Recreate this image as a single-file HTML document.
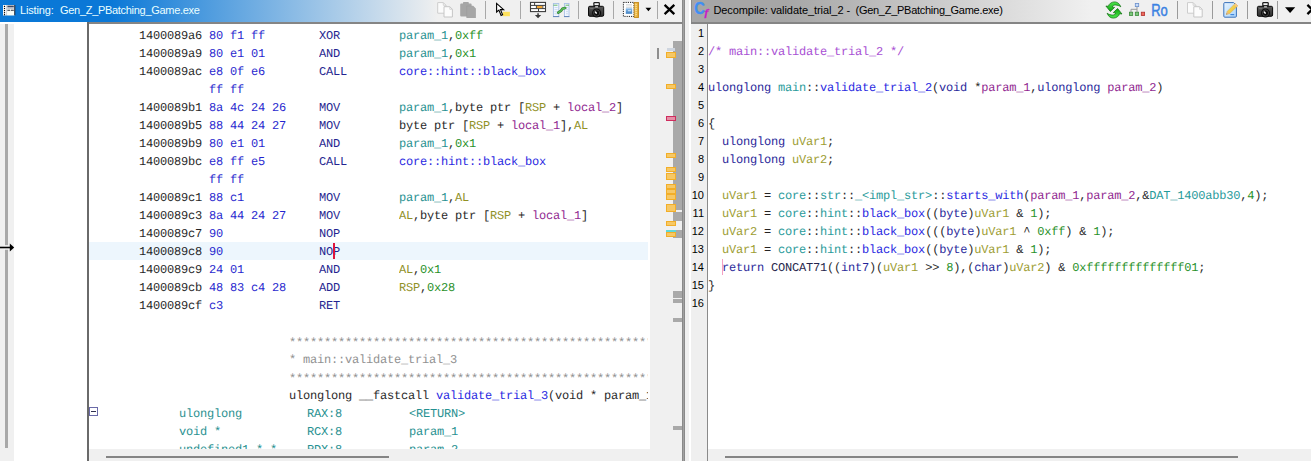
<!DOCTYPE html>
<html><head><meta charset="utf-8"><title>Ghidra</title>
<style>
html,body{margin:0;padding:0}
body{width:1311px;height:461px;overflow:hidden;background:#fff;position:relative;font-family:"Liberation Sans",sans-serif}
.a{position:absolute}
.t{position:absolute;white-space:pre;font-family:"Liberation Mono",monospace;font-size:12px;letter-spacing:-0.2px;line-height:18px;height:18px;color:#000;transform:translateY(1px);text-rendering:geometricPrecision;opacity:.86}
.ln{position:absolute;left:690px;width:14px;text-align:right;font-family:"Liberation Sans",sans-serif;font-size:11px;line-height:18px;height:18px;color:#000}
.by{color:#0000c8}.mn{color:#000080}.pa{color:#008080}.sc{color:#008000}.fn{color:#0000dc}.rg{color:#808000}.lo{color:#800080}.cm{color:#808080}.as{position:relative;top:1px}
.dc{color:#9a32cd}.ty{color:#00008b}.gl{color:#008b8b}.pr{color:#800080}.va{color:#8e8e0a}.kw{color:#00008b}.op{color:#000030}
.sep{position:absolute;top:1px;width:1px;height:18px;background:#b4b4b4}
.title{position:absolute;top:-1px;height:22px;line-height:22px;font-size:11px;white-space:pre}
#lclip{position:absolute;left:89px;top:24px;width:559px;height:425px;overflow:hidden}
#lclip .t{margin-left:-89px;margin-top:-24px}
.mk{position:absolute;left:666px;width:10px;border:1px solid #f2ae28;background:#f6c866;box-sizing:border-box}
</style></head><body>

<!-- ===== left panel: Listing ===== -->
<div class="a" style="left:0;top:0;width:682px;height:22px;background:linear-gradient(90deg,#0a78d7 0px,#0a78d7 110px,#f0f0f0 438px,#f0f0f0 100%)"></div>
<div class="a" style="left:87px;top:22px;width:595px;height:2px;background:#858585"></div>
<svg class="a" style="left:0;top:0" width="20" height="22" viewBox="0 0 20 22">
<rect x="3" y="5" width="12" height="10.3" fill="#f4f4f0"/>
<rect x="3" y="5" width="3.2" height="10.3" fill="#fff"/>
<rect x="6.2" y="5" width="1" height="10.3" fill="#c8ccd4"/>
<g fill="#000"><rect x="3.9" y="5.8" width="1.2" height="1.2"/><rect x="3.9" y="7.9" width="1.2" height="1.2"/><rect x="3.9" y="10" width="1.2" height="1.2"/><rect x="3.9" y="12.1" width="1.2" height="1.2"/><rect x="3.9" y="14.1" width="1.2" height="1.2"/></g>
<rect x="7.4" y="5.6" width="6.4" height="1.6" fill="#3c4660"/>
<rect x="7.4" y="7.4" width="6.4" height="1.2" fill="#9aa4b8"/>
<path d="M7.4 10.2H10M10.8 10.2H13.8" stroke="#2a3040" stroke-width="1.1"/>
<rect x="7.2" y="11.4" width="6.8" height="3.9" fill="#fbfdf6"/>
<rect x="14.2" y="5" width="1.1" height="10.3" fill="#1c2a3c"/>
</svg>
<div class="title" style="left:20px;color:#eaffff;letter-spacing:-0.15px">Listing:</div>
<div class="title" style="left:60px;color:#eaffff;letter-spacing:-0.3px">Gen_Z_PBatching_Game.exe</div>

<!-- left gutter -->
<div class="a" style="left:0;top:24px;width:14px;height:437px;background:#f0f0f0"></div>
<div class="a" style="left:5px;top:24px;width:3px;height:424px;background:#a8a8a8"></div>
<div class="a" style="left:87px;top:22px;width:2px;height:439px;background:#6a6a6a"></div>
<!-- listing current line highlight -->
<div class="a" style="left:89px;top:242px;width:559px;height:18px;background:#edf6fd"></div>
<!-- right margin / overview -->
<div class="a" style="left:650px;top:24px;width:32px;height:437px;background:#f0f0f0"></div>
<div class="a" style="left:89px;top:449px;width:593px;height:12px;background:#f0f0f0"></div>
<div class="a" style="left:106px;top:456px;width:283px;height:2px;background:#858585"></div>
<!-- overview dark column -->
<div class="a" style="left:673px;top:41px;width:9px;height:169px;background:#a9a9a9"></div>
<div class="a" style="left:673px;top:212px;width:9px;height:9px;background:#a9a9a9"></div>
<div class="a" style="left:673px;top:230px;width:9px;height:8px;background:#a9a9a9"></div>
<div class="a" style="left:673px;top:291px;width:9px;height:7px;background:#a9a9a9"></div>
<div class="a" style="left:673px;top:299px;width:9px;height:4px;background:#a9a9a9"></div>
<div class="a" style="left:673px;top:318px;width:9px;height:4px;background:#a9a9a9"></div>
<div class="a" style="left:673px;top:426px;width:9px;height:4px;background:#a9a9a9"></div>
<div class="a" style="left:657px;top:48px;width:2px;height:11px;background:#8e8e8e"></div>
<!-- markers -->
<div class="a" style="left:667px;top:48px;width:8px;height:3px;background:#cfd6e0"></div>
<div class="mk" style="top:52px;height:6px"></div>
<div class="mk" style="top:84px;height:5px"></div>
<div class="mk" style="top:116px;height:5px;background:#e58fa6;border-color:#cf2c5e"></div>
<div class="mk" style="top:153px;height:5px"></div>
<div class="mk" style="top:167px;height:5px"></div>
<div class="mk" style="top:173px;height:7px"></div>
<div class="mk" style="top:184px;height:5px"></div>
<div class="mk" style="top:189px;height:5px"></div>
<div class="mk" style="top:194px;height:6px"></div>
<div class="mk" style="top:204px;height:8px"></div>
<div class="mk" style="top:221px;height:5px"></div>
<div class="a" style="left:666px;top:230px;width:10px;height:2px;background:#5fd8d8"></div>
<div class="mk" style="top:232px;height:5px"></div>

<!-- divider -->
<div class="a" style="left:682px;top:0;width:3px;height:461px;background:linear-gradient(90deg,#8a8a8a 0,#8a8a8a 1px,#a2a2a2 1px,#a2a2a2 2px,#8a8a8a 2px)"></div>
<div class="a" style="left:685px;top:0;width:4px;height:461px;background:#f0f0f0"></div>

<div id="lclip">
<div class="t" style="left:139px;top:26px">1400089a6</div>
<div class="t" style="left:209px;top:26px"><span class="by">80 f1 ff</span></div>
<div class="t" style="left:319px;top:26px"><span class="mn">XOR</span></div>
<div class="t" style="left:399px;top:26px"><span class="pa">param_1</span>,<span class="sc">0xff</span></div>
<div class="t" style="left:139px;top:44px">1400089a9</div>
<div class="t" style="left:209px;top:44px"><span class="by">80 e1 01</span></div>
<div class="t" style="left:319px;top:44px"><span class="mn">AND</span></div>
<div class="t" style="left:399px;top:44px"><span class="pa">param_1</span>,<span class="sc">0x1</span></div>
<div class="t" style="left:139px;top:62px">1400089ac</div>
<div class="t" style="left:209px;top:62px"><span class="by">e8 0f e6</span></div>
<div class="t" style="left:319px;top:62px"><span class="mn">CALL</span></div>
<div class="t" style="left:399px;top:62px"><span class="fn">core::hint::black_box</span></div>
<div class="t" style="left:209px;top:80px"><span class="by">ff ff</span></div>
<div class="t" style="left:139px;top:98px">1400089b1</div>
<div class="t" style="left:209px;top:98px"><span class="by">8a 4c 24 26</span></div>
<div class="t" style="left:319px;top:98px"><span class="mn">MOV</span></div>
<div class="t" style="left:399px;top:98px"><span class="pa">param_1</span>,byte ptr [<span class="rg">RSP</span> + <span class="lo">local_2</span>]</div>
<div class="t" style="left:139px;top:116px">1400089b5</div>
<div class="t" style="left:209px;top:116px"><span class="by">88 44 24 27</span></div>
<div class="t" style="left:319px;top:116px"><span class="mn">MOV</span></div>
<div class="t" style="left:399px;top:116px">byte ptr [<span class="rg">RSP</span> + <span class="lo">local_1</span>],<span class="rg">AL</span></div>
<div class="t" style="left:139px;top:134px">1400089b9</div>
<div class="t" style="left:209px;top:134px"><span class="by">80 e1 01</span></div>
<div class="t" style="left:319px;top:134px"><span class="mn">AND</span></div>
<div class="t" style="left:399px;top:134px"><span class="pa">param_1</span>,<span class="sc">0x1</span></div>
<div class="t" style="left:139px;top:152px">1400089bc</div>
<div class="t" style="left:209px;top:152px"><span class="by">e8 ff e5</span></div>
<div class="t" style="left:319px;top:152px"><span class="mn">CALL</span></div>
<div class="t" style="left:399px;top:152px"><span class="fn">core::hint::black_box</span></div>
<div class="t" style="left:209px;top:170px"><span class="by">ff ff</span></div>
<div class="t" style="left:139px;top:188px">1400089c1</div>
<div class="t" style="left:209px;top:188px"><span class="by">88 c1</span></div>
<div class="t" style="left:319px;top:188px"><span class="mn">MOV</span></div>
<div class="t" style="left:399px;top:188px"><span class="pa">param_1</span>,<span class="rg">AL</span></div>
<div class="t" style="left:139px;top:206px">1400089c3</div>
<div class="t" style="left:209px;top:206px"><span class="by">8a 44 24 27</span></div>
<div class="t" style="left:319px;top:206px"><span class="mn">MOV</span></div>
<div class="t" style="left:399px;top:206px"><span class="rg">AL</span>,byte ptr [<span class="rg">RSP</span> + <span class="lo">local_1</span>]</div>
<div class="t" style="left:139px;top:224px">1400089c7</div>
<div class="t" style="left:209px;top:224px"><span class="by">90</span></div>
<div class="t" style="left:319px;top:224px"><span class="mn">NOP</span></div>
<div class="t" style="left:139px;top:242px">1400089c8</div>
<div class="t" style="left:209px;top:242px"><span class="by">90</span></div>
<div class="t" style="left:319px;top:242px"><span class="mn">NOP</span></div>
<div class="t" style="left:139px;top:260px">1400089c9</div>
<div class="t" style="left:209px;top:260px"><span class="by">24 01</span></div>
<div class="t" style="left:319px;top:260px"><span class="mn">AND</span></div>
<div class="t" style="left:399px;top:260px"><span class="rg">AL</span>,<span class="sc">0x1</span></div>
<div class="t" style="left:139px;top:278px">1400089cb</div>
<div class="t" style="left:209px;top:278px"><span class="by">48 83 c4 28</span></div>
<div class="t" style="left:319px;top:278px"><span class="mn">ADD</span></div>
<div class="t" style="left:399px;top:278px"><span class="rg">RSP</span>,<span class="sc">0x28</span></div>
<div class="t" style="left:139px;top:296px">1400089cf</div>
<div class="t" style="left:209px;top:296px"><span class="by">c3</span></div>
<div class="t" style="left:319px;top:296px"><span class="mn">RET</span></div>
<div class="t" style="left:289px;top:332px"><span class="cm as">************************************************************</span></div>
<div class="t" style="left:289px;top:350px"><span class="cm">* main::validate_trial_3</span></div>
<div class="t" style="left:289px;top:368px"><span class="cm as">************************************************************</span></div>
<div class="t" style="left:289px;top:386px">ulonglong __fastcall <span class="fn">validate_trial_3</span>(void * param_1, ulonglong param_2)</div>
<div class="t" style="left:179px;top:404px"><span class="pa">ulonglong</span></div>
<div class="t" style="left:307px;top:404px"><span class="pa">RAX:8</span></div>
<div class="t" style="left:409px;top:404px"><span class="pa">&lt;RETURN&gt;</span></div>
<div class="t" style="left:179px;top:422px"><span class="pa">void *</span></div>
<div class="t" style="left:307px;top:422px"><span class="pa">RCX:8</span></div>
<div class="t" style="left:409px;top:422px"><span class="pa">param_1</span></div>
<div class="t" style="left:179px;top:440px"><span class="pa">undefined1 * *</span></div>
<div class="t" style="left:307px;top:440px"><span class="pa">RDX:8</span></div>
<div class="t" style="left:409px;top:440px"><span class="pa">param_2</span></div>
</div>
<!-- caret -->
<div class="a" style="left:333px;top:243px;width:2px;height:16px;background:#e0143c"></div>
<!-- collapse box -->
<div class="a" style="left:89px;top:407px;width:7px;height:7px;border:1px solid #6a6aa8;background:#fff"></div>
<div class="a" style="left:91px;top:411px;width:5px;height:1px;background:#303050"></div>
<!-- arrow -->
<svg class="a" style="left:0;top:240px" width="16" height="16" viewBox="0 0 16 16"><rect x="4" y="5.2" width="5" height="4.5" fill="#f6f6f6"/><path d="M0 7.5H10" stroke="#000" stroke-width="1.6"/><path d="M9.8 3.6L14.2 7.5L9.8 11.4Z" fill="#000"/></svg>

<svg class="a" style="left:430px;top:0" width="252" height="22" viewBox="430 0 252 22">
<defs>
<linearGradient id="cam" x1="0" y1="0" x2="0" y2="1"><stop offset="0" stop-color="#5a5a5a"/><stop offset="1" stop-color="#2c2c2c"/></linearGradient>
<linearGradient id="rul" x1="0" y1="0" x2="1" y2="0"><stop offset="0" stop-color="#f6d070"/><stop offset="1" stop-color="#e0a020"/></linearGradient>
<linearGradient id="blu" x1="0" y1="0" x2="0" y2="1"><stop offset="0" stop-color="#8ec0ee"/><stop offset="1" stop-color="#3f7fc0"/></linearGradient>
</defs>
<!-- copy (disabled) -->
<path d="M437.7 2.6H443.3L446 5.3V13.2H437.7Z" fill="#fbfbfb" stroke="#cdcdcd" stroke-width="1"/>
<path d="M443.3 2.6V5.3H446" fill="none" stroke="#cdcdcd" stroke-width=".8"/>
<path d="M444 6.7H449.8L452.4 9.3V17H444Z" fill="#fcfcfc" stroke="#c6c6c6" stroke-width="1"/>
<path d="M449.8 6.7V9.3H452.4" fill="none" stroke="#cdcdcd" stroke-width=".8"/>
<!-- paste (disabled) -->
<path d="M460.2 4.6Q460.2 3.6 461.2 3.6H463V2.6Q463 2 463.8 2H468Q468.8 2 468.8 2.6V3.6H470.6Q471.6 3.6 471.6 4.6V5.7H473.2L475.9 8.4V17.9H466.4V16.5H461.2Q460.2 16.5 460.2 15.5Z" fill="#a6a6a6"/>
<path d="M466.6 6V16.4M471.4 6H466.6" stroke="#9a9a9a" stroke-width=".6" fill="none"/>
<!-- separators -->
<rect x="485" y="1" width="1" height="18" fill="#a8a8a8"/>
<rect x="520" y="1" width="1" height="18" fill="#a8a8a8"/>
<rect x="578" y="1" width="1" height="18" fill="#a8a8a8"/>
<rect x="613" y="1" width="1" height="18" fill="#a8a8a8"/>
<rect x="657" y="1" width="1" height="18" fill="#a8a8a8"/>
<!-- cursor + highlight -->
<rect x="502.8" y="11.8" width="7.1" height="4.4" fill="#fde15e"/>
<path d="M496.6 3.4V12L498.9 10.1L501.1 15.4L502.6 14.7L500.5 9.6L503.6 9.6Z" fill="#fff" stroke="#000" stroke-width="1.1" stroke-linejoin="miter"/>
<!-- table w/ arrow -->
<rect x="530.5" y="2.4" width="15" height="9.2" fill="#fff" stroke="#3c3c3c" stroke-width="1.1"/>
<path d="M530.5 5.4H545.5M530.5 8.6H545.5M534.6 2.4V5.4M536.4 5.4V8.6M542.8 5.4V8.6M538.5 8.6V11.6" stroke="#3c3c3c" stroke-width="1" fill="none"/>
<rect x="537" y="6" width="5.3" height="2.1" fill="#f2a632"/>
<path d="M537.3 13.2H538.8V15H541.2L538.05 18.2L534.9 15H537.3Z" fill="#3a3a3a"/>
<!-- diff -->
<rect x="553.4" y="3.5" width="5.4" height="13" fill="#f2f7ff" stroke="#a9c0e6" stroke-width=".9"/>
<rect x="564.4" y="3.5" width="4.6" height="13" fill="#f2f7ff" stroke="#a9c0e6" stroke-width=".9"/>
<path d="M553 16.6H559.2M564 16.6H569.4" stroke="#6283b8" stroke-width="1"/>
<path d="M553.4 5.2H557.5M565.5 5.2H569" stroke="#58b058" stroke-width=".9"/>
<path d="M554.5 7.5H557.6M554.5 9.6H557.6M554.5 11.7H557.6M554.5 13.8H557.6M566 7.5H568M566 9.6H568M566 11.7H568M566 13.8H568" stroke="#c3d3ee" stroke-width=".8"/>
<path d="M558.2 12.6L561 10.8L562.6 8.6L565.2 8" stroke="#2c7a2c" stroke-width="2.6" fill="none" stroke-linecap="round"/>
<path d="M558.2 12.6L561 10.8L562.6 8.6L565.2 8" stroke="#5cc05c" stroke-width="1.3" fill="none" stroke-linecap="round"/>
<!-- camera -->
<g id="camg">
<path d="M593.3 6.4V3.2Q593.3 2.1 594.4 2.1H598.8Q599.9 2.1 599.9 3.2V6.4Z" fill="#1e1e1e"/>
<rect x="594.5" y="3.2" width="4.2" height="1.9" fill="#f2f2f2"/>
<rect x="588.5" y="6.3" width="15.2" height="10" rx="1.3" fill="url(#cam)" stroke="#0a0a0a" stroke-width="1"/>
<rect x="595.2" y="6.3" width="2.8" height="1.1" fill="#e8e8e8"/>
<path d="M590.2 8.6H593.4" stroke="#7c7c7c" stroke-width=".8"/>
<circle cx="596.6" cy="13" r="4.5" fill="#0c0c0c"/>
<circle cx="596.6" cy="13" r="3.1" fill="none" stroke="#4c4c4c" stroke-width=".8"/>
<ellipse cx="595.9" cy="12.6" rx="1.5" ry=".8" transform="rotate(45 595.9 12.6)" fill="#f4f4f4"/>
</g>
<!-- ruler / field icon -->
<rect x="623.4" y="2.4" width="10.6" height="14" fill="#fff" stroke="#222" stroke-width="1" stroke-dasharray="1.2 1"/>
<path d="M626 4.9H632M626 7.2H632" stroke="#c4c8cc" stroke-width=".9"/>
<rect x="625.8" y="8.3" width="6.4" height="5.5" fill="url(#blu)"/>
<rect x="628" y="10.2" width="3" height="1" fill="#d6e8fa"/>
<rect x="634.3" y="2.5" width="4.2" height="15" fill="url(#rul)" stroke="#c58a1c" stroke-width=".9"/>
<path d="M635.6 4.5H636.6M635.6 6.5H636.6M635.6 8.5H636.6M635.6 10.5H636.6M635.6 12.5H636.6M635.6 14.5H636.6" stroke="#fff3c0" stroke-width=".9"/>
<!-- dropdown -->
<path d="M645.5 7.8H651.3L648.4 11.3Z" fill="#000"/>
<!-- close X -->
<path d="M664.6 4.9L674.3 14.1M674.3 4.9L664.6 14.1" stroke="#000" stroke-width="2.3" fill="none"/>
</svg>


<!-- ===== right panel: Decompile ===== -->
<div class="a" style="left:691px;top:0;width:620px;height:22px;background:linear-gradient(90deg,#a6a6a6 0px,#a6a6a6 95px,#f0f0f0 400px,#f0f0f0 100%)"></div>
<div class="a" style="left:691px;top:0;width:1px;height:24px;background:#8c8c8c"></div>
<div class="a" style="left:691px;top:22px;width:620px;height:2px;background:#858585"></div>
<div class="title" style="left:713.4px;color:#000;letter-spacing:-0.075px">Decompile: validate_trial_2 -</div>
<div class="title" style="left:855.5px;color:#000;letter-spacing:-0.27px">(Gen_Z_PBatching_Game.exe)</div>
<div class="a" style="left:691px;top:24px;width:16px;height:437px;background:#efefef"></div>
<div class="a" style="left:707px;top:24px;width:1px;height:437px;background:#8a8a8a"></div>
<div class="a" style="left:708px;top:449px;width:603px;height:12px;background:#f0f0f0"></div>
<div class="a" style="left:725px;top:456px;width:513px;height:2px;background:#858585"></div>
<div class="a" style="left:722px;top:259px;width:1px;height:16px;background:#f4a0c4"></div>
<div class="ln" style="top:24px">1</div>
<div class="ln" style="top:42px">2</div>
<div class="t" style="left:708px;top:42px"><span class="dc">/* main::validate_trial_2 */</span></div>
<div class="ln" style="top:60px">3</div>
<div class="ln" style="top:78px">4</div>
<div class="t" style="left:708px;top:78px"><span class="ty">ulonglong</span> <span class="gl">main</span>::<span class="fn">validate_trial_2</span>(<span class="ty">void</span> *<span class="pr">param_1</span>,<span class="ty">ulonglong</span> <span class="pr">param_2</span>)</div>
<div class="ln" style="top:96px">5</div>
<div class="ln" style="top:114px">6</div>
<div class="t" style="left:708px;top:114px">{</div>
<div class="ln" style="top:132px">7</div>
<div class="t" style="left:708px;top:132px">  <span class="ty">ulonglong</span> <span class="va">uVar1</span>;</div>
<div class="ln" style="top:150px">8</div>
<div class="t" style="left:708px;top:150px">  <span class="ty">ulonglong</span> <span class="va">uVar2</span>;</div>
<div class="ln" style="top:168px">9</div>
<div class="ln" style="top:186px">10</div>
<div class="t" style="left:708px;top:186px">  <span class="va">uVar1</span> = <span class="gl">core</span>::<span class="gl">str</span>::<span class="gl">_&lt;impl_str&gt;</span>::<span class="fn">starts_with</span>(<span class="pr">param_1</span>,<span class="pr">param_2</span>,&amp;<span class="gl">DAT_1400abb30</span>,<span class="sc">4</span>);</div>
<div class="ln" style="top:204px">11</div>
<div class="t" style="left:708px;top:204px">  <span class="va">uVar1</span> = <span class="gl">core</span>::<span class="gl">hint</span>::<span class="fn">black_box</span>((<span class="ty">byte</span>)<span class="va">uVar1</span> &amp; <span class="sc">1</span>);</div>
<div class="ln" style="top:222px">12</div>
<div class="t" style="left:708px;top:222px">  <span class="va">uVar2</span> = <span class="gl">core</span>::<span class="gl">hint</span>::<span class="fn">black_box</span>(((<span class="ty">byte</span>)<span class="va">uVar1</span> ^ <span class="sc">0xff</span>) &amp; <span class="sc">1</span>);</div>
<div class="ln" style="top:240px">13</div>
<div class="t" style="left:708px;top:240px">  <span class="va">uVar1</span> = <span class="gl">core</span>::<span class="gl">hint</span>::<span class="fn">black_box</span>((<span class="ty">byte</span>)<span class="va">uVar1</span> &amp; <span class="sc">1</span>);</div>
<div class="ln" style="top:258px">14</div>
<div class="t" style="left:708px;top:258px">  <span class="kw">return</span> <span class="op">CONCAT71</span>((<span class="ty">int7</span>)(<span class="va">uVar1</span> &gt;&gt; <span class="sc">8</span>),(<span class="ty">char</span>)<span class="va">uVar2</span>) &amp; <span class="sc">0xffffffffffffff01</span>;</div>
<div class="ln" style="top:276px">15</div>
<div class="t" style="left:708px;top:276px">}</div>
<div class="ln" style="top:294px">16</div>
<svg class="a" style="left:691px;top:0" width="620" height="24" viewBox="691 0 620 24">
<defs>
<linearGradient id="grn" x1="0" y1="0" x2="0" y2="1"><stop offset="0" stop-color="#4fe84f"/><stop offset="1" stop-color="#0fa20f"/></linearGradient>
<linearGradient id="pg" x1="0" y1="0" x2="1" y2="1"><stop offset="0" stop-color="#e6f3ff"/><stop offset="1" stop-color="#a9d4fb"/></linearGradient>
<linearGradient id="pen" x1="0" y1="0" x2="1" y2="1"><stop offset="0" stop-color="#fbe36a"/><stop offset="1" stop-color="#e9b92e"/></linearGradient>
</defs>
<!-- Cf icon -->
<text x="694.2" y="14.3" style="font-family:'Liberation Sans',sans-serif;font-weight:bold;font-size:16.6px" fill="#3f8ff4" stroke="#3f8ff4" stroke-width=".3" textLength="10.6" lengthAdjust="spacingAndGlyphs">C</text>
<text x="704.4" y="15.6" style="font-family:'Liberation Serif',serif;font-style:italic;font-weight:bold;font-size:11.4px" fill="#c81ac8" stroke="#c81ac8" stroke-width=".3">f</text>
<!-- refresh -->
<path id="rfa" d="M1120.8 6.8C1119.6 3.2 1116.6 1.7 1114.2 1.9C1111.4 2.1 1109.1 3.7 1108.3 6.3L1105.9 6L1110.3 11.5L1114.6 7.4L1112.2 7C1112.7 5.6 1113.9 5 1115.3 5C1117.3 5 1119.3 5.7 1120.8 6.8Z" fill="url(#grn)" stroke="#0c6c0c" stroke-width=".7" stroke-linejoin="round"/>
<use href="#rfa" transform="rotate(180 1113.95 10)"/>
<!-- tree -->
<path d="M1137 6.7V12M1131 12V9.3H1137" stroke="#9a9a9a" stroke-width="1" fill="none"/>
<rect x="1135.3" y="3.4" width="3.4" height="3.2" fill="#c6dcfa" stroke="#6c8fca" stroke-width=".8"/>
<rect x="1129.4" y="12.2" width="3.3" height="3.3" fill="#7cc87c" stroke="#3c8a3c" stroke-width=".8"/>
<rect x="1135.3" y="12.2" width="3.3" height="3.3" fill="#7cc87c" stroke="#3c8a3c" stroke-width=".8"/>
<rect x="1141.3" y="12.2" width="3.3" height="3.3" fill="#ee6a5a" stroke="#b03030" stroke-width=".8"/>
<!-- Ro -->
<text x="1151.2" y="16" font-family="Liberation Sans, sans-serif" font-size="16.6" fill="#3b82e2" stroke="#3b82e2" stroke-width=".5" textLength="16.6" lengthAdjust="spacingAndGlyphs">Ro</text>
<!-- separators -->
<rect x="1177" y="1" width="1" height="18" fill="#9a9a9a"/>
<rect x="1212" y="1" width="1" height="18" fill="#9a9a9a"/>
<rect x="1247" y="1" width="1" height="18" fill="#9a9a9a"/>
<rect x="1277" y="1" width="1" height="18" fill="#9a9a9a"/>
<!-- copy (disabled) -->
<g transform="translate(749.8 0)">
<path d="M437.7 2.6H443.3L446 5.3V13.2H437.7Z" fill="#fbfbfb" stroke="#cdcdcd" stroke-width="1"/>
<path d="M443.3 2.6V5.3H446" fill="none" stroke="#cdcdcd" stroke-width=".8"/>
<path d="M444 6.7H449.8L452.4 9.3V17H444Z" fill="#fcfcfc" stroke="#c6c6c6" stroke-width="1"/>
<path d="M449.8 6.7V9.3H452.4" fill="none" stroke="#cdcdcd" stroke-width=".8"/>
</g>
<!-- edit -->
<path d="M1223.8 3.6Q1223.8 2.6 1224.8 2.6H1233.6L1236.4 5.4V16.2Q1236.4 17.2 1235.4 17.2H1224.8Q1223.8 17.2 1223.8 16.2Z" fill="url(#pg)" stroke="#3a72ba" stroke-width="1"/>
<path d="M1230.4 14.6H1234.2" stroke="#3f86dc" stroke-width="1.2"/>
<path d="M1235.2 3.4L1237.8 5.8L1229.6 13.6L1226.4 14.4L1227.2 11.4Z" fill="url(#pen)" stroke="#d9a63a" stroke-width=".5"/>
<path d="M1235.2 3.4L1237.8 5.8L1236.6 7L1234 4.6Z" fill="#f2c48a"/>
<path d="M1227.2 11.4L1229.6 13.6L1226.4 14.4Z" fill="#e9b87e"/>
<path d="M1226.4 14.4L1226.7 13.4L1227.4 14.1Z" fill="#444"/>
<!-- camera -->
<use href="#camg" transform="translate(668.9 0)"/>
<!-- dropdown -->
<path d="M1285 7.2H1295.2L1290.1 13Z" fill="#000"/>
<!-- close X (clipped) -->
<path d="M1307.4 4.9L1317.1 14.1M1317.1 4.9L1307.4 14.1" stroke="#000" stroke-width="2.3" fill="none"/>
</svg>

</body></html>
